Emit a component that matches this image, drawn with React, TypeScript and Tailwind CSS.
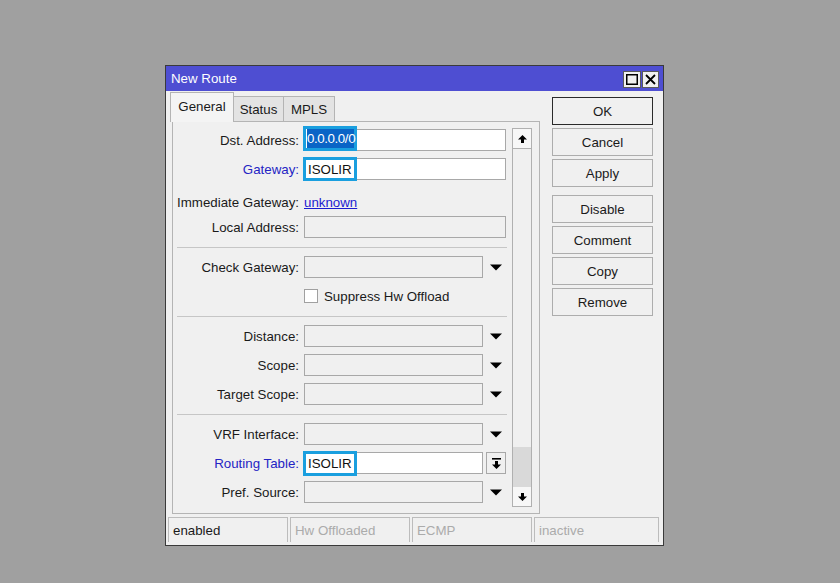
import React from 'react'

const font = "font-['Liberation_Sans',Arial,sans-serif]"

function DropArrow() {
  return (
    <svg width="12" height="7" viewBox="0 0 12 7" className="ml-[7px] shrink-0">
      <path d="M0 0.5h12L6 6.5z" fill="#000" />
    </svg>
  )
}

function Label({ text, blue }: { text: string; blue?: boolean }) {
  return (
    <div className={`w-[126px] shrink-0 pt-[2px] text-right whitespace-nowrap ${blue ? 'text-[#2424c4]' : 'text-[#1a1a1a]'}`}>
      {text}
    </div>
  )
}

function Row({ mt, children }: { mt: string; children: React.ReactNode }) {
  return <div className={`flex items-center h-[22px] ${mt}`}>{children}</div>
}

function EmptyField({ dropdown }: { dropdown?: boolean }) {
  return (
    <>
      <div className={`ml-[5px] h-[22px] border border-[#a8a8a8] bg-[#f0f0f0] ${dropdown ? 'w-[179px]' : 'w-[202px]'}`} />
      {dropdown && <DropArrow />}
    </>
  )
}

function Separator({ mt }: { mt: string }) {
  return <div className={`ml-[4px] w-[330px] h-[1px] bg-[#c6c6c6] ${mt}`} />
}

function Button({ label, primary, className = '' }: { label: string; primary?: boolean; className?: string }) {
  return (
    <div
      className={`h-[28px] w-[101px] flex items-center justify-center pt-[1px] border ${primary ? 'border-[#2a2a2a]' : 'border-[#adadad]'} bg-[#f0f0f0] text-[#1a1a1a] ${className}`}
    >
      {label}
    </div>
  )
}

function StatusCell({ text, dim, className = '' }: { text: string; dim?: boolean; className?: string }) {
  return (
    <div
      className={`h-[25px] border-l border-t border-r border-[#bcbcbc] pl-[4px] pt-[1px] flex items-center ${dim ? 'text-[#ababab]' : 'text-[#1a1a1a]'} ${className}`}
    >
      {text}
    </div>
  )
}

export default function App() {
  return (
    <div className={`w-[840px] h-[583px] bg-[#a0a0a0] pl-[165px] pt-[65px] ${font} text-[13.3px] leading-none`}>
      <div className="w-[499px] h-[481px] border border-[#3a3a3a] bg-[#f0f0f0] flex flex-col">
        {/* title bar */}
        <div className="h-[25px] bg-[#4e4ed2] flex items-center justify-between pl-[5px] pr-[4px]">
          <span className="text-white pt-[1px]">New Route</span>
          <div className="flex gap-[1px] pt-[2px]">
            <div className="w-[18px] h-[17px] bg-[#f0f0f0] border border-[#5a5a5a] flex items-center justify-center">
              <svg width="12" height="11" viewBox="0 0 12 11">
                <rect x="0.75" y="0.75" width="10.5" height="9.5" fill="none" stroke="#000" strokeWidth="1.5" />
              </svg>
            </div>
            <div className="w-[17px] h-[17px] bg-[#f0f0f0] border border-[#5a5a5a] flex items-center justify-center">
              <svg width="11" height="11" viewBox="0 0 11 11">
                <path d="M1 1L10 10M10 1L1 10" stroke="#000" strokeWidth="1.8" />
              </svg>
            </div>
          </div>
        </div>

        {/* main */}
        <div className="flex">
          <div className="ml-[4px] w-[370px] pt-[1px] flex flex-col">
            {/* tabs */}
            <div className="h-[29px] flex items-end">
              <div className="relative z-10 -mb-[1px] h-[30px] w-[64px] border-l border-t border-r border-[#b4b4b4] bg-[#f4f4f4] flex items-center justify-center pb-[2px] text-[#1a1a1a]">
                General
              </div>
              <div className="h-[25px] w-[50px] border-t border-r border-[#b4b4b4] bg-[#e3e3e3] flex items-center justify-center pt-[1px] text-[#1a1a1a]">
                Status
              </div>
              <div className="h-[25px] w-[51px] border-t border-r border-[#b4b4b4] bg-[#e3e3e3] flex items-center justify-center pt-[1px] text-[#1a1a1a]">
                MPLS
              </div>
            </div>

            {/* tab panel */}
            <div className="ml-[2px] w-[368px] h-[393px] border border-[#b4b4b4] bg-[#f0f0f0] flex pt-[6px]">
              <div className="w-[339px] flex flex-col -mt-[6px]">
                <Row mt="mt-[7px]">
                  <Label text="Dst. Address:" />
                  <div className="relative ml-[5px] h-[22px] w-[202px] border border-[#a8a8a8] bg-white">
                    <div className="absolute -left-[2px] -top-[4px] w-[54px] h-[25px] border-[3px] border-[#1a9fdf] bg-white pl-[1px]">
                      <div className="h-full bg-[#0a64c6] text-white flex items-center pt-[1px] tracking-[-0.4px]">0.0.0.0/0</div>
                    </div>
                  </div>
                </Row>
                <Row mt="mt-[7px]">
                  <Label text="Gateway:" blue />
                  <div className="relative ml-[5px] h-[22px] w-[202px] border border-[#a8a8a8] bg-white">
                    <div className="absolute -left-[2px] -top-[2px] w-[54px] h-[24px] border-[3px] border-[#1a9fdf] bg-white flex items-center pl-[2px] pt-[1px] text-[#111]">
                      ISOLIR
                    </div>
                  </div>
                </Row>
                <Row mt="mt-[11px]">
                  <Label text="Immediate Gateway:" />
                  <span className="ml-[5px] pt-[2px] text-[#1c1cd0] underline">unknown</span>
                </Row>
                <Row mt="mt-[3px]">
                  <Label text="Local Address:" />
                  <EmptyField />
                </Row>
                <Separator mt="mt-[9px]" />
                <Row mt="mt-[8px]">
                  <Label text="Check Gateway:" />
                  <EmptyField dropdown />
                </Row>
                <Row mt="mt-[7px]">
                  <div className="w-[126px] shrink-0" />
                  <div className="ml-[5px] w-[14px] h-[14px] border border-[#a0a0a0] bg-white" />
                  <span className="ml-[6px] pt-[2px] text-[#1a1a1a]">Suppress Hw Offload</span>
                </Row>
                <Separator mt="mt-[9px]" />
                <Row mt="mt-[8px]">
                  <Label text="Distance:" />
                  <EmptyField dropdown />
                </Row>
                <Row mt="mt-[7px]">
                  <Label text="Scope:" />
                  <EmptyField dropdown />
                </Row>
                <Row mt="mt-[7px]">
                  <Label text="Target Scope:" />
                  <EmptyField dropdown />
                </Row>
                <Separator mt="mt-[9px]" />
                <Row mt="mt-[8px]">
                  <Label text="VRF Interface:" />
                  <EmptyField dropdown />
                </Row>
                <Row mt="mt-[7px]">
                  <Label text="Routing Table:" blue />
                  <div className="relative ml-[5px] h-[22px] w-[179px] border border-[#a8a8a8] bg-white">
                    <div className="absolute -left-[2px] -top-[2px] w-[54px] h-[25px] border-[3px] border-[#1a9fdf] bg-white flex items-center pl-[2px] pt-[1px] text-[#111]">
                      ISOLIR
                    </div>
                  </div>
                  <div className="ml-[3px] w-[20px] h-[22px] border border-[#a8a8a8] bg-[#f0f0f0] flex items-center justify-center">
                    <svg width="11" height="11" viewBox="0 0 11 11">
                      <path d="M1 0h9v1.6H1z" fill="#000" />
                      <path d="M4 3h3v3.5h3L5.5 11 1 6.5h3z" fill="#000" />
                    </svg>
                  </div>
                </Row>
                <Row mt="mt-[7px]">
                  <Label text="Pref. Source:" />
                  <EmptyField dropdown />
                </Row>
              </div>

              {/* scrollbar */}
              <div className="w-[20px] h-[379px] border border-[#b0b0b0] bg-[#f0f0f0] flex flex-col">
                <div className="h-[20px] border-b border-[#b0b0b0] bg-[#f7f7f7] flex items-center justify-center">
                  <svg width="9" height="8" viewBox="0 0 9 8">
                    <path d="M4.5 0L9 4.5H6V8H3V4.5H0z" fill="#000" />
                  </svg>
                </div>
                <div className="flex-1" />
                <div className="h-[40px] bg-[#d9d9d9]" />
                <div className="h-[19px] bg-[#f7f7f7] flex items-center justify-center">
                  <svg width="9" height="8" viewBox="0 0 9 8">
                    <path d="M4.5 8L9 3.5H6V0H3V3.5H0z" fill="#000" />
                  </svg>
                </div>
              </div>
            </div>
          </div>

          {/* buttons */}
          <div className="ml-[12px] pt-[6px] flex flex-col gap-[3px]">
            <Button label="OK" primary />
            <Button label="Cancel" />
            <Button label="Apply" />
            <Button label="Disable" className="mt-[5px]" />
            <Button label="Comment" />
            <Button label="Copy" />
            <Button label="Remove" />
          </div>
        </div>

        {/* status bar */}
        <div className="mt-[3px] ml-[2px] mr-[4px] flex gap-[2px]">
          <StatusCell text="enabled" className="w-[120px]" />
          <StatusCell text="Hw Offloaded" dim className="w-[120px]" />
          <StatusCell text="ECMP" dim className="w-[120px]" />
          <StatusCell text="inactive" dim className="flex-1" />
        </div>
      </div>
    </div>
  )
}
